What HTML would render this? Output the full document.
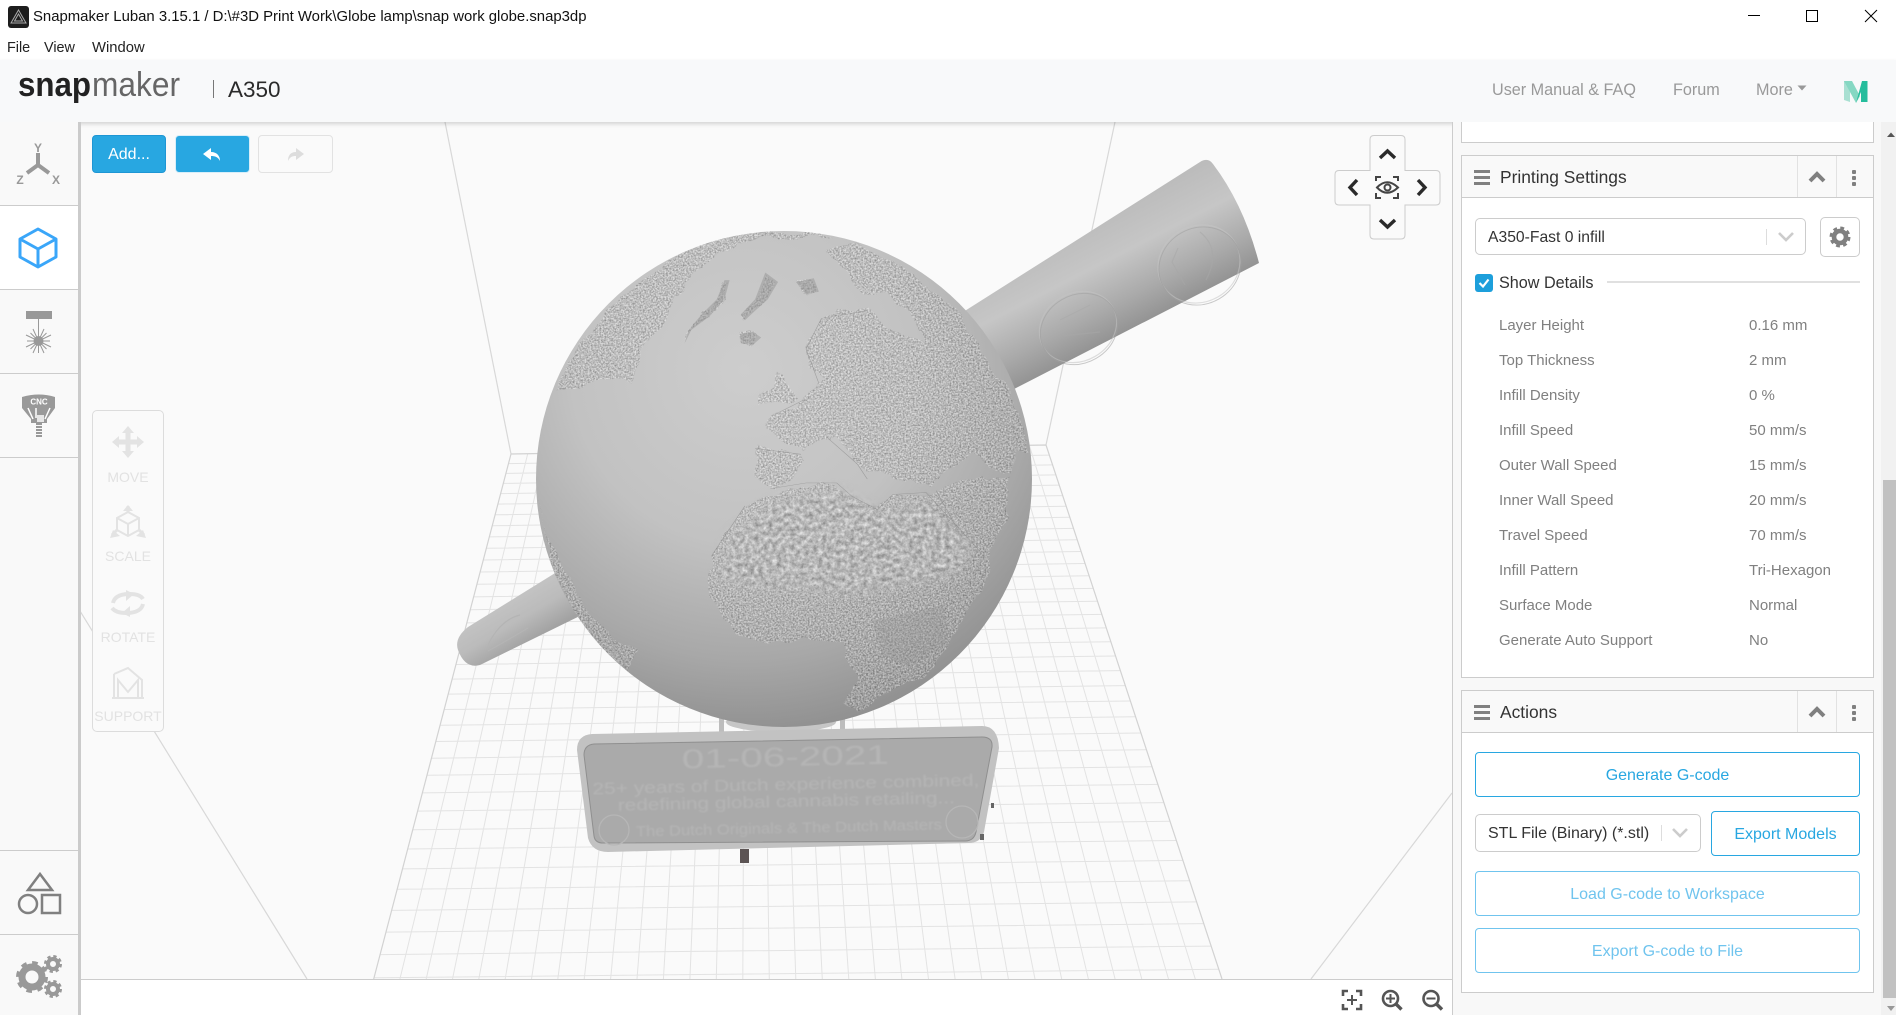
<!DOCTYPE html>
<html><head><meta charset="utf-8"><title>Snapmaker Luban</title>
<style>
html,body{margin:0;padding:0;width:1896px;height:1015px;overflow:hidden;background:#fff;font-family:"Liberation Sans",sans-serif;color:#222}
.a{position:absolute;white-space:nowrap}
.panel{position:absolute;left:1461px;width:411px;border:1px solid #ccc;background:#fff}
.phead{position:absolute;left:0;top:0;right:0;height:41px;background:#f9f9f9;border-bottom:1px solid #ccc}
.ptitle{position:absolute;left:38px;top:0;line-height:42px;font-size:17.4px;color:#333}
.bar{position:absolute;left:12px;width:16px;height:3px;background:#808080}
.sep{position:absolute;top:0;height:41px;width:1px;background:#e2e2e2}
.dot{position:absolute;left:390px;width:4px;height:4px;border-radius:1px;background:#808080}
.btn{position:absolute;box-sizing:border-box;border:1px solid #28a7e1;border-radius:4px;background:#fff;color:#28a7e1;font-size:16px;text-align:center;white-space:nowrap}
.off{border-color:#70c4ee;color:#70c4ee}
.row{position:absolute;height:35px;line-height:35px;font-size:15px;color:#808080;white-space:nowrap}
.sel{position:absolute;box-sizing:border-box;border:1px solid #ccc;border-radius:5px;background:#fff;color:#333;white-space:nowrap}
.tl{position:absolute;left:92px;width:72px;text-align:center;font-size:14px;color:#e2e2e2;white-space:nowrap}
</style></head><body>

<!-- 3D canvas -->
<svg class="a" style="left:0;top:0" width="1896" height="1015" viewBox="0 0 1896 1015">
<defs>
<clipPath id="cv"><rect x="81" y="122" width="1371" height="857"/></clipPath>
<clipPath id="gc"><circle cx="784" cy="479" r="248"/></clipPath>
<radialGradient id="gg" gradientUnits="userSpaceOnUse" cx="745" cy="370" r="385">
<stop offset="0" stop-color="#cdcdcd"/><stop offset=".45" stop-color="#c2c2c2"/><stop offset=".75" stop-color="#a8a8a8"/><stop offset="1" stop-color="#8a8a8a"/>
</radialGradient>
<linearGradient id="t1" gradientUnits="userSpaceOnUse" x1="1085" y1="225" x2="1140" y2="332">
<stop offset="0" stop-color="#bcbcbc"/><stop offset=".35" stop-color="#c6c6c6"/><stop offset=".7" stop-color="#aaa"/><stop offset="1" stop-color="#8e8e8e"/>
</linearGradient>
<linearGradient id="t2" gradientUnits="userSpaceOnUse" x1="505" y1="600" x2="530" y2="642">
<stop offset="0" stop-color="#c4c4c4"/><stop offset=".5" stop-color="#bbb"/><stop offset="1" stop-color="#a2a2a2"/>
</linearGradient>
<filter id="tex" filterUnits="userSpaceOnUse" x="520" y="210" width="530" height="540" color-interpolation-filters="sRGB">
<feTurbulence type="fractalNoise" baseFrequency=".035" numOctaves="3" seed="3" result="w"/>
<feDisplacementMap in="SourceAlpha" in2="w" scale="14" xChannelSelector="R" yChannelSelector="G" result="m"/>
<feTurbulence type="fractalNoise" baseFrequency=".6" numOctaves="2" seed="8"/>
<feColorMatrix values="1.4 0 0 0 0 1.4 0 0 0 0 1.4 0 0 0 0 0 0 0 0 .4"/>
<feComposite in2="m" operator="in"/>
</filter>
<filter id="tex2" filterUnits="userSpaceOnUse" x="520" y="210" width="530" height="540" color-interpolation-filters="sRGB">
<feGaussianBlur in="SourceAlpha" stdDeviation="6" result="m"/>
<feTurbulence type="fractalNoise" baseFrequency=".22" numOctaves="3" seed="5"/>
<feColorMatrix values=".6 0 0 0 .42 .6 0 0 0 .42 .6 0 0 0 .42 0 0 0 0 .8"/>
<feComposite in2="m" operator="in"/>
</filter>
<filter id="soft" x="-5%" y="-20%" width="110%" height="140%"><feGaussianBlur stdDeviation=".7"/></filter>
</defs>
<rect x="81" y="122" width="1371" height="857" fill="#fafafa"/>
<g clip-path="url(#cv)">
<path fill="none" stroke="#d8d8d8" stroke-width="1.2" d="M445,122L511,454M1115,122L1046,445M80,611L307,979M1452,793L1311,979"/>
<path fill="none" stroke="#e3e3e3" stroke-width="1" d="M527.7,453.7L399.9,979M544.4,453.4L426.2,979M561.2,453.2L452.5,979M577.9,452.9L478.8,979M594.6,452.6L505.2,979M611.3,452.3L531.5,979M628,452L557.8,979M644.8,451.8L584.2,979M661.5,451.5L610.6,979M678.2,451.2L637,979M694.9,450.9L663.4,979M711.6,450.6L689.9,979M728.4,450.3L716.3,979M745.1,450.1L742.8,979M761.8,449.8L769.3,979M778.5,449.5L795.8,979M795.2,449.2L822.3,979M812,448.9L848.8,979M828.7,448.7L875.4,979M845.4,448.4L901.9,979M862.1,448.1L928.5,979M878.8,447.8L955.1,979M895.6,447.5L981.8,979M912.3,447.3L1008.4,979M929,447L1035,979M945.7,446.7L1061.7,979M962.4,446.4L1088.4,979M979.2,446.1L1115.1,979M995.9,445.9L1141.8,979M1012.6,445.6L1168.5,979M1029.3,445.3L1195.3,979
M508.5,463.6L1049.3,455.1M505.9,473.4L1052.5,464.9M503.3,483.4L1055.8,474.9M500.6,493.6L1059.2,485.1M497.9,504.1L1062.7,495.6M495.1,514.8L1066.2,506.3M492.2,525.7L1069.8,517.2M489.3,536.9L1073.5,528.4M486.3,548.3L1077.2,539.8M483.3,560L1081.1,551.5M480.1,572L1085.1,563.5M476.9,584.3L1089.1,575.8M473.6,596.9L1093.2,588.4M470.3,609.7L1097.5,601.2M466.8,622.9L1101.8,614.4M463.3,636.4L1106.3,627.9M459.7,650.3L1110.9,641.8M455.9,664.5L1115.5,656M452.1,679.1L1120.4,670.6M448.2,694.1L1125.3,685.6M444.2,709.5L1130.4,701M440,725.3L1135.6,716.8M435.8,741.5L1140.9,733M431.4,758.2L1146.4,749.7M427,775.3L1152.1,766.8M422.4,792.9L1157.9,784.4M417.6,811.1L1163.9,802.6M412.7,829.8L1170,821.3M407.7,849L1176.4,840.5M402.5,868.9L1182.9,860.4M397.2,889.3L1189.6,880.8M391.6,910.4L1196.6,901.9M386,932.1L1203.7,923.6M380.1,954.6L1211.1,946.1M374,977.8L1218.8,969.3"/>
<path fill="none" stroke="#d2d2d2" stroke-width="1.2" d="M511,454L1046,445M511,454L373.7,979M1046,445L1222,979"/>

<!-- lower-left tube -->
<path fill="url(#t2)" d="M468,627L560,570L592,610L480,665Q465,669 458,650Q454,638 468,627Z"/>
<path fill="none" stroke="#b4b4b4" stroke-width="1.2" d="M488,645Q500,620 520,615M488,651Q508,640 528,628"/>

<!-- upper-right tube -->
<path fill="url(#t1)" d="M900,352L1200,162Q1208,157 1213,164Q1244,205 1259,263L950,422Z"/>
<g fill="none" opacity=".55">
<ellipse cx="1078" cy="327" rx="40" ry="34" transform="rotate(-30 1078 327)" stroke="#c4c4c4" stroke-width="1.2"/>
<ellipse cx="1079" cy="329" rx="40" ry="34" transform="rotate(-30 1079 329)" stroke="#a0a0a0" stroke-width="1"/>
<ellipse cx="1199" cy="264" rx="42" ry="38" transform="rotate(-30 1199 264)" stroke="#c6c6c6" stroke-width="1.2"/>
<ellipse cx="1200" cy="266" rx="42" ry="38" transform="rotate(-30 1200 266)" stroke="#a0a0a0" stroke-width="1"/>
<path stroke="#a8a8a8" stroke-width="1.2" d="M1178,248L1172,262L1185,285M1200,232Q1222,250 1206,280M1060,320L1090,305M1062,336L1100,332"/>
</g>

<!-- base and posts -->
<rect x="719" y="716" width="5" height="16" fill="#bdbdbd"/>
<rect x="840" y="716" width="5" height="14" fill="#bdbdbd"/>
<ellipse cx="781" cy="722" rx="55" ry="10" fill="#c6c6c6"/>

<!-- globe -->
<circle cx="784" cy="479" r="248" fill="url(#gg)"/>
<g clip-path="url(#gc)">
<g filter="url(#tex)">
<g transform="translate(500,150) scale(.5102,.3827)">
<path d="M110,630L135,560L175,470L230,390L300,310L380,250L480,212L560,212L650,225L620,232L545,228L470,235L440,260L400,300L370,340L345,390L325,440L300,480L280,530L262,610L230,590L180,610Z"/>
<path d="M440,340L425,390L395,430L370,470L362,505L375,470L410,435L440,390L450,340Z"/>
<path d="M520,320L545,345L525,390L500,420L480,445L472,430L500,390Z"/>
<path d="M580,345L615,335L625,370L600,378Z"/>
<path d="M470,480L495,475L512,490L495,510L472,505Z"/>
<path d="M680,320L700,350L745,375L715,375L690,350Z"/>
<path d="M690,240L760,290L835,355L895,420L940,510L985,610L1020,690L1038,790L1010,785L1000,840L960,830L925,790L880,830L850,870L800,870L760,850L720,840L690,810L660,750L625,760L600,790L550,770L520,720L540,690L600,650L625,610L640,590L600,570L600,520L630,440L660,420L720,420L760,470L830,500L800,420L760,380L745,370L690,340L660,290L640,270Z"/>
<path d="M545,575L570,610L585,650L545,660L510,665L515,630L535,610Z"/>
<path d="M505,780L590,795L600,810L570,860L535,885L500,860Z"/>
<path d="M480,930L540,900L590,880L660,870L690,905L740,940L770,900L835,895L855,890L900,860L960,860L1000,850L990,960L960,1050L950,1100L935,1170L905,1230L880,1300L830,1370L770,1410L700,1470L680,1450L700,1390L670,1330L670,1295L600,1275L520,1290L470,1270L430,1210L410,1160L415,1060L440,1010Z"/>
<path d="M75,890L90,1010L130,1100L170,1200L230,1290L268,1310L250,1370L200,1310L140,1200L100,1100Z"/>
</g></g>
<g filter="url(#tex2)"><path transform="translate(500,150) scale(.5102,.3827)" d="M450,1010L540,920L660,890L740,950L840,910L930,1040L900,1110L700,1160L430,1130Z"/></g>
<g transform="translate(500,150) scale(.5102,.3827)">
<path fill="#8a8a8a" opacity=".4" d="M440,340L425,390L395,430L370,470L362,505L375,470L410,435L440,390L450,340ZM520,320L545,345L525,390L500,420L480,445L472,430L500,390ZM580,345L615,335L625,370L600,378ZM470,480L495,475L512,490L495,510L472,505Z"/>
<path fill="#959595" opacity=".3" d="M730,1230L870,1190L880,1290L800,1350L750,1320Z"/>
<path fill="none" stroke="#8a8a8a" stroke-width="1.2" opacity=".7" d="M625,610L600,520L630,440L720,420M500,780L590,795M530,885L600,870L660,870L690,905L740,940L770,900L835,895L880,960L945,1055M855,890L900,1000M415,1060L440,1010L480,930M640,750L700,820L720,860M540,690L600,650"/>
</g>
</g>

<!-- plaque -->
<path d="M577,750Q577,735 592,734L982,726Q998,726 999,748L984,832Q981,843 968,843L608,852Q592,852 588,838Z" fill="#c2c2c2"/>
<path d="M584,755Q584,745 594,744L982,737Q993,737 992,747L976,832Q974,841 965,841L603,843Q595,843 594,836Z" fill="#aaa" stroke="#8f8f8f" stroke-width="1"/>
<g transform="rotate(-1.3 786 790)" font-family="'Liberation Sans',sans-serif" text-anchor="middle" fill="#b5b5b5" filter="url(#soft)">
<text x="786" y="766" font-size="27" textLength="207" lengthAdjust="spacingAndGlyphs">01-06-2021</text>
<text x="786" y="790" font-size="17" textLength="387" lengthAdjust="spacingAndGlyphs">25+ years of Dutch experience combined,</text>
<text x="786" y="807" font-size="17" textLength="337" lengthAdjust="spacingAndGlyphs">redefining global cannabis retailing...</text>
<text x="788" y="833" font-size="15" textLength="306" lengthAdjust="spacingAndGlyphs">The Dutch Originals &amp; The Dutch Masters</text>
</g>
<g fill="none" stroke="#b6b6b6" stroke-width="1.3"><circle cx="614" cy="830" r="15"/><circle cx="962" cy="822" r="16"/></g>
<rect x="740" y="849" width="9" height="14" fill="#5c5454"/>
<rect x="991" y="803" width="3" height="5" fill="#666"/>
<rect x="980" y="834" width="4" height="6" fill="#666"/>
</g>
<path d="M81,979.5H1452" stroke="#ccc" fill="none"/>
</svg>

<!-- window chrome -->
<svg class="a" style="left:8px;top:6px" width="22" height="22" viewBox="0 0 22 22"><rect width="21" height="22" rx="3" fill="#1d1d1d"/><path d="M10.5,4L18,17H3Z M10.5,8L14.5,15H6.5Z" fill="none" stroke="#aaa" stroke-width="1"/></svg>
<div class="a" id="ttl" style="left:33px;top:8px;line-height:18px;font-size:14.9px;color:#111">Snapmaker Luban 3.15.1 / D:\#3D Print Work\Globe lamp\snap work globe.snap3dp</div>
<div class="a" style="left:7px;top:40px;line-height:17px;font-size:14.4px;color:#222">File</div>
<div class="a" style="left:44px;top:40px;line-height:17px;font-size:14.4px;color:#222">View</div>
<div class="a" style="left:92px;top:40px;line-height:17px;font-size:14.8px;color:#222">Window</div>
<svg class="a" style="left:1740px;top:0" width="150" height="30" viewBox="1740 0 150 30" fill="none" stroke="#000" stroke-width="1"><path d="M1748,15.5H1760"/><rect x="1806.5" y="10.5" width="11" height="11"/><path d="M1865,10L1877,22M1877,10L1865,22"/></svg>

<!-- header -->
<div class="a" style="left:0;top:60px;width:1896px;height:62px;background:#f8f9fa;box-shadow:0 2px 4px rgba(0,0,0,.16)"></div>
<svg class="a" style="left:0;top:60px" width="300" height="62" viewBox="0 60 300 62" font-family="'Liberation Sans',sans-serif">
<text x="18" y="96" font-size="34" font-weight="bold" fill="#222" textLength="73" lengthAdjust="spacingAndGlyphs">snap</text>
<text x="92" y="96" font-size="34" fill="#666" textLength="88" lengthAdjust="spacingAndGlyphs">maker</text>
<path d="M213.5,80V98" stroke="#777"/>
</svg>
<div class="a" style="left:228px;top:76px;line-height:28px;font-size:22.5px;color:#2a2a2a">A350</div>
<div class="a" style="left:1492px;top:80px;line-height:20px;font-size:16.2px;color:#999">User Manual &amp; FAQ</div>
<div class="a" style="left:1673px;top:80px;line-height:20px;font-size:16.2px;color:#999">Forum</div>
<div class="a" style="left:1756px;top:80px;line-height:20px;font-size:16.2px;color:#999">More</div>
<svg class="a" style="left:1796px;top:84px" width="12" height="8" viewBox="0 0 12 8"><path d="M1.5,1.5H10.5L6,6.5Z" fill="#999"/></svg>
<svg class="a" style="left:1840px;top:78px" width="32" height="28" viewBox="1840 78 32 28"><path d="M1844,81L1850,83V102L1844,100Z" fill="#a9e0d2"/><path d="M1844,81H1852L1860,96L1856,103Z" fill="#86d8c3"/><path d="M1856,103L1862,81H1867.5V102H1861V92Z" fill="#25bd9c"/></svg>

<!-- left sidebar -->
<div class="a" style="left:0;top:122px;width:78px;height:893px;background:#f9f9f9;border-right:3px solid #cbcbcb"></div>
<div class="a" style="left:0;top:205px;width:78px;height:84px;background:#fff"></div>
<div class="a" style="left:0;top:205px;width:78px;height:1px;background:#ccc"></div>
<div class="a" style="left:0;top:289px;width:78px;height:1px;background:#ccc"></div>
<div class="a" style="left:0;top:373px;width:78px;height:1px;background:#ccc"></div>
<div class="a" style="left:0;top:457px;width:78px;height:1px;background:#ccc"></div>
<div class="a" style="left:0;top:850px;width:78px;height:1px;background:#ccc"></div>
<div class="a" style="left:0;top:934px;width:78px;height:1px;background:#ccc"></div>
<svg class="a" style="left:0;top:122px" width="78" height="893" viewBox="0 122 78 893" font-family="'Liberation Sans',sans-serif">
<!-- axes -->
<path d="M38,153V165L27,173M38,165L49,173" fill="none" stroke="#999" stroke-width="4"/>
<g font-size="12" font-weight="bold" fill="#999" text-anchor="middle"><text x="38" y="152">Y</text><text x="20" y="184">Z</text><text x="56" y="184">X</text></g>
<!-- cube -->
<path d="M38,229L56,239V257L38,267L20,257V239ZM20,239L38,249L56,239M38,249V267" fill="none" stroke="#3aa6f9" stroke-width="3" stroke-linejoin="round"/>
<!-- laser -->
<rect x="26" y="311" width="26" height="8" fill="#999"/>
<path d="M38.5,319V353M27,341H50M30.5,333L46.5,349M46.5,333L30.5,349M33,329L44,353M44,329L33,353M26,335L51,347M51,335L26,347" stroke="#999" stroke-width="1"/>
<circle cx="38.5" cy="341" r="5" fill="#999"/>
<!-- cnc -->
<path d="M22,397Q39,392 55,397V408L47,419V423H31V419L22,408Z" fill="#999"/>
<text x="39" y="404.5" font-size="8" font-weight="bold" fill="#fff" text-anchor="middle">CNC</text>
<path d="M28,408L33,419M50,408L45,419M36,408V418" stroke="#fff" stroke-width="1.5"/>
<rect x="37" y="415" width="7" height="7" fill="#e6e6e6"/>
<path d="M36,424H42M36,427H42M36,430H42M36,433H42M36,436H42" stroke="#999" stroke-width="2"/>
<!-- shapes -->
<g fill="none" stroke="#808080" stroke-width="2.5"><path d="M40,874L52,890H28Z"/><circle cx="28" cy="904" r="9"/><rect x="42" y="895" width="18" height="18"/></g>
<!-- gears -->
<g fill="none" stroke="#999"><circle cx="32" cy="977" r="10" stroke-width="7"/><circle cx="32" cy="977" r="14" stroke-width="4" stroke-dasharray="5.5 5.5"/>
<circle cx="53" cy="964" r="5" stroke-width="4"/><circle cx="53" cy="964" r="7.5" stroke-width="3" stroke-dasharray="3.2 2.7"/>
<circle cx="53" cy="989" r="5" stroke-width="4"/><circle cx="53" cy="989" r="7.5" stroke-width="3" stroke-dasharray="3.2 2.7"/></g>
</svg>

<!-- canvas toolbar -->
<div class="a" style="left:92px;top:135px;box-sizing:border-box;width:74px;height:38px;background:#28a7e1;border:1px solid #1e96d4;border-radius:4px;color:#fff;font-size:16px;line-height:38px;text-align:center">Add...</div>
<div class="a" style="left:175px;top:135px;box-sizing:border-box;width:75px;height:38px;background:#28a7e1;border:1px solid #d8eef9;border-radius:4px"></div>
<div class="a" style="left:258px;top:135px;box-sizing:border-box;width:75px;height:38px;background:#fafafa;border:1px solid #e2e2e2;border-radius:4px"></div>
<svg class="a" style="left:190px;top:140px" width="130" height="28" viewBox="190 140 130 28"><path d="M203,154L211,148V152C217,152 220,156 220,161C218,157 215,156 211,156V160Z" fill="#fff"/><path d="M304,154L296,148V152C290,152 288,156 288,161C290,157 292,156 296,156V160Z" fill="#ddd"/></svg>

<div class="a" style="left:92px;top:410px;box-sizing:border-box;width:72px;height:322px;background:#fafafa;border:1px solid #dcdcdc;border-radius:5px"></div>
<svg class="a" style="left:92px;top:410px" width="72" height="322" viewBox="92 410 72 322" fill="none" stroke="#e3e3e3">
<path d="M128,430V454M116,442H140" stroke-width="5"/>
<path d="M128,426L134,433H122ZM128,458L134,451H122ZM112,442L119,436V448ZM144,442L137,436V448Z" fill="#e3e3e3" stroke="none"/>
<path d="M128,512L139,518V530L128,536L117,530V518ZM117,518L128,524L139,518M128,524V536" stroke-width="2"/>
<path d="M128,512V506M117,530L112,535M139,530L144,535" stroke-width="3"/>
<path d="M128,505L133,511H123ZM110,538L120,536L113,530ZM146,538L136,536L143,530Z" fill="#e3e3e3" stroke="none"/>
<path d="M113,603Q115,594 130,594Q140,594 143,599" stroke-width="4"/><path d="M143,604Q141,613 126,613Q116,613 112,608" stroke-width="4"/>
<path d="M126,590L134,594L126,601ZM130,606L122,613L130,617Z" fill="#e3e3e3" stroke="none"/>
<path d="M114,674L128,668L142,680V698M114,674V698M112,698H144M118,698V680L128,692L138,680V698" stroke-width="2"/>
</svg>
<div class="tl" style="top:469px;line-height:17px">MOVE</div>
<div class="tl" style="top:548px;line-height:17px">SCALE</div>
<div class="tl" style="top:629px;line-height:17px">ROTATE</div>
<div class="tl" style="top:708px;line-height:17px">SUPPORT</div>

<!-- view pad -->
<svg class="a" style="left:1330px;top:130px" width="116" height="114" viewBox="1330 130 116 114">
<path d="M1374,135.5H1401Q1405,135.5 1405,139.5V170.5H1436Q1440,170.5 1440,174.5V201Q1440,205 1436,205H1405V235Q1405,239 1401,239H1374Q1370,239 1370,235V205H1339Q1335,205 1335,201V174.5Q1335,170.5 1339,170.5H1370V139.5Q1370,135.5 1374,135.5Z" fill="#fafafa" stroke="#ccc"/>
<g fill="none" stroke="#2a2a2a" stroke-width="3.4"><path d="M1380,158L1387.5,151L1395,158M1380,220L1387.5,227L1395,220M1357,180L1350,187.5L1357,195M1418,180L1425,187.5L1418,195"/></g>
<g fill="none" stroke="#444"><path stroke-width="2" d="M1376,181V177H1381M1393,177H1398V181M1398,193V198H1393M1381,198H1376V193"/><path stroke-width="2" d="M1377,187.5Q1387,177 1398,187.5Q1387,198 1377,187.5Z"/><circle cx="1387.5" cy="187.5" r="3" stroke-width="2"/></g>
</svg>

<!-- zoom buttons -->
<svg class="a" style="left:1335px;top:984px" width="115" height="30" viewBox="1335 984 115 30" fill="none" stroke="#555" stroke-width="2.6">
<path d="M1343,996V991H1348M1356,991H1361V996M1361,1004V1009H1356M1348,1009H1343V1004"/>
<path d="M1347,1000H1357M1352,995V1005" stroke-width="2"/>
<circle cx="1390.5" cy="998.5" r="7.5"/><path d="M1396,1004L1401.5,1009.5" stroke-width="3.4"/><path d="M1386,998.5H1395M1390.5,994V1003" stroke-width="2"/>
<circle cx="1431" cy="998.5" r="7.5"/><path d="M1436.5,1004L1442,1009.5" stroke-width="3.4"/><path d="M1426.5,998.5H1435.5" stroke-width="2"/>
</svg>

<!-- right sidebar -->
<div class="a" style="left:1452px;top:122px;width:429px;height:893px;background:#f8f8f8;border-left:1px solid #ccc;box-sizing:border-box"></div>
<div class="a" style="left:1881px;top:122px;width:15px;height:893px;background:#f1f1f1"></div>
<div class="a" style="left:1883px;top:480px;width:13px;height:518px;background:#c1c1c1"></div>
<svg class="a" style="left:1881px;top:122px" width="15" height="893" viewBox="1881 122 15 893"><path d="M1887,137H1895L1891,132.5Z" fill="#555"/><path d="M1887,1006H1895L1891,1011Z" fill="#999"/></svg>

<div class="a" style="left:1461px;top:122px;width:411px;height:20px;background:#fff;border:1px solid #ccc;border-top:0"></div>

<div class="panel" style="top:155px;height:521px">
<div class="phead"><div class="bar" style="top:14px"></div><div class="bar" style="top:20px"></div><div class="bar" style="top:26px"></div>
<div class="ptitle">Printing Settings</div><div class="sep" style="left:335px"></div><div class="sep" style="left:374px"></div>
<svg style="position:absolute;left:346px;top:14px" width="18" height="14" viewBox="0 0 18 14"><path d="M2,11L9,4L16,11" fill="none" stroke="#808080" stroke-width="4"/></svg>
<div class="dot" style="top:14px"></div><div class="dot" style="top:20px"></div><div class="dot" style="top:26px"></div></div>
</div>

<div class="sel" style="left:1475px;top:218px;width:331px;height:37px;line-height:37px;font-size:15.7px;padding-left:12px">A350-Fast 0 infill</div>
<svg class="a" style="left:1760px;top:225px" width="40" height="24" viewBox="0 0 40 24"><path d="M6.5,4V20" stroke="#ddd"/><path d="M19,8L26,15L33,8" fill="none" stroke="#ccc" stroke-width="2.6"/></svg>
<div class="a" style="left:1820px;top:217px;box-sizing:border-box;width:40px;height:40px;background:#fff;border:1px solid #ccc;border-radius:5px"></div>
<svg class="a" style="left:1828px;top:225px" width="24" height="24" viewBox="0 0 24 24" fill="none" stroke="#808080"><circle cx="12" cy="12" r="6" stroke-width="4.6"/><circle cx="12" cy="12" r="9" stroke-width="3" stroke-dasharray="3.8 3.27"/></svg>

<div class="a" style="left:1475px;top:274px;width:18px;height:18px;border-radius:3px;background:#1d9fdb"></div>
<svg class="a" style="left:1475px;top:274px" width="18" height="18" viewBox="0 0 18 18"><path d="M4.5,9L8,12.5L13.5,5.5" fill="none" stroke="#fff" stroke-width="2.2"/></svg>
<div class="a" style="left:1499px;top:273px;line-height:20px;font-size:16.2px;color:#333">Show Details</div>
<div class="a" style="left:1607px;top:281px;width:253px;height:2px;background:#e0e0e0"></div>

<div class="row" style="left:1499px;top:308px">Layer Height</div><div class="row" style="left:1749px;top:308px">0.16 mm</div>
<div class="row" style="left:1499px;top:343px">Top Thickness</div><div class="row" style="left:1749px;top:343px">2 mm</div>
<div class="row" style="left:1499px;top:378px">Infill Density</div><div class="row" style="left:1749px;top:378px">0 %</div>
<div class="row" style="left:1499px;top:413px">Infill Speed</div><div class="row" style="left:1749px;top:413px">50 mm/s</div>
<div class="row" style="left:1499px;top:448px">Outer Wall Speed</div><div class="row" style="left:1749px;top:448px">15 mm/s</div>
<div class="row" style="left:1499px;top:483px">Inner Wall Speed</div><div class="row" style="left:1749px;top:483px">20 mm/s</div>
<div class="row" style="left:1499px;top:518px">Travel Speed</div><div class="row" style="left:1749px;top:518px">70 mm/s</div>
<div class="row" style="left:1499px;top:553px">Infill Pattern</div><div class="row" style="left:1749px;top:553px">Tri-Hexagon</div>
<div class="row" style="left:1499px;top:588px">Surface Mode</div><div class="row" style="left:1749px;top:588px">Normal</div>
<div class="row" style="left:1499px;top:623px">Generate Auto Support</div><div class="row" style="left:1749px;top:623px">No</div>

<div class="panel" style="top:690px;height:301px">
<div class="phead"><div class="bar" style="top:14px"></div><div class="bar" style="top:20px"></div><div class="bar" style="top:26px"></div>
<div class="ptitle">Actions</div><div class="sep" style="left:335px"></div><div class="sep" style="left:374px"></div>
<svg style="position:absolute;left:346px;top:14px" width="18" height="14" viewBox="0 0 18 14"><path d="M2,11L9,4L16,11" fill="none" stroke="#808080" stroke-width="4"/></svg>
<div class="dot" style="top:14px"></div><div class="dot" style="top:20px"></div><div class="dot" style="top:26px"></div></div>
</div>

<div class="btn" style="left:1475px;top:752px;width:385px;height:45px;line-height:45px">Generate G-code</div>
<div class="sel" style="left:1475px;top:814px;width:226px;height:38px;line-height:38px;font-size:16px;padding-left:12px">STL File (Binary) (*.stl)</div>
<svg class="a" style="left:1655px;top:821px" width="44" height="24" viewBox="0 0 44 24"><path d="M6.5,4V20" stroke="#ddd"/><path d="M18,8L25,15L32,8" fill="none" stroke="#ccc" stroke-width="2.6"/></svg>
<div class="btn" style="left:1711px;top:811px;width:149px;height:45px;line-height:45px">Export Models</div>
<div class="btn off" style="left:1475px;top:871px;width:385px;height:45px;line-height:45px">Load G-code to Workspace</div>
<div class="btn off" style="left:1475px;top:928px;width:385px;height:45px;line-height:45px">Export G-code to File</div>
</body></html>
